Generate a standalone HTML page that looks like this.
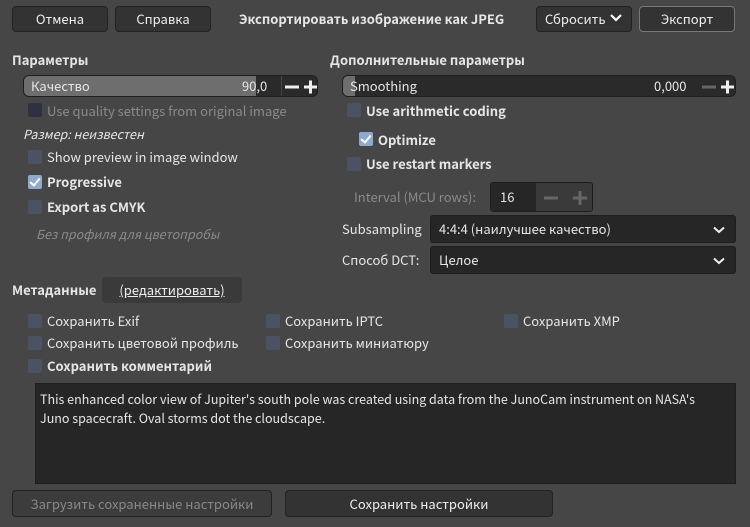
<!DOCTYPE html>
<html><head><meta charset="utf-8"><style>
*{box-sizing:border-box;margin:0;padding:0}
body{width:750px;height:527px;background:#464646;font-family:"Noto Sans CJK SC","DejaVu Sans",sans-serif;font-size:13px;color:#e6e6e6;position:relative;overflow:hidden}
.a{position:absolute;white-space:nowrap;line-height:16px}
.btn{position:absolute;background:#333;border:1px solid #222;border-radius:4px;text-align:center;color:#eee;font-size:13px}
.b{font-weight:bold}
.cb{position:absolute;width:14px;height:14px;background:#4a5263;border-radius:2px}
.cb.on{background:#8fa9cf}
.cb.on:after{content:"";position:absolute;left:4px;top:1px;width:4px;height:8px;border:solid #fff;border-width:0 2px 2px 0;transform:rotate(40deg)}
.dark{position:absolute;background:#262626;border:1px solid #1e1e1e;border-radius:3px}
.grey{color:#8a8a8a}
svg{position:absolute}
</style></head><body>
<div class="btn" style="left:12px;top:6px;width:96px;height:26px;line-height:24px">Отмена</div>
<div class="btn" style="left:115px;top:6px;width:96px;height:26px;line-height:24px">Справка</div>
<div class="a b" style="left:239px;top:11px">Экспортировать изображение как JPEG</div>
<div class="btn" style="left:536px;top:6px;width:96px;height:26px;line-height:24px;text-align:left;padding-left:8px">Сбросить</div>
<svg style="left:609px;top:13px" width="14" height="10"><path d="M2 2 L7 7 L12 2" stroke="#fff" stroke-width="2.2" fill="none"/></svg>
<div class="btn" style="left:639px;top:6px;width:96px;height:26px;line-height:24px;border-color:#777">Экспорт</div>

<div class="a b" style="left:12px;top:52px">Параметры</div>
<div class="dark" style="left:23px;top:75px;width:295px;height:22px;background:#2a2a2a;border-radius:6px;overflow:hidden">
 <div style="position:absolute;left:0;top:0;width:232px;height:22px;background:#6e6e6e"></div>
 <div class="a" style="left:7px;top:2px">Качество</div>
 <div class="a" style="left:218px;top:2px">90,0</div>
 <div style="position:absolute;left:257px;top:0;width:1px;height:22px;background:#444"></div>
 <svg style="left:260px;top:3px" width="34" height="16"><path d="M1 8 H15 M20 8 H33 M26.5 1.5 V14.5" stroke="#eee" stroke-width="3" fill="none"/></svg>
</div>
<div class="cb" style="left:28px;top:103px;background:#2e3240"></div>
<div class="a grey" style="left:47px;top:103px">Use quality settings from original image</div>
<div class="a" style="left:23px;top:126px;font-style:italic;font-size:12.5px">Размер: неизвестен</div>
<div class="cb" style="left:28px;top:150px"></div>
<div class="a" style="left:47px;top:149px">Show preview in image window</div>
<div class="cb on" style="left:28px;top:175px"></div>
<div class="a b" style="left:47px;top:174px">Progressive</div>
<div class="cb" style="left:28px;top:200px"></div>
<div class="a b" style="left:47px;top:199px">Export as CMYK</div>
<div class="a grey" style="left:36px;top:226px;font-style:italic;font-size:12.5px">Без профиля для цветопробы</div>

<div class="a b" style="left:330px;top:52px">Дополнительные параметры</div>
<div class="dark" style="left:342px;top:75px;width:394px;height:22px;background:#2a2a2a;border-radius:6px;overflow:hidden">
 <div style="position:absolute;left:0;top:0;width:12px;height:22px;background:#6e6e6e"></div>
 <div class="a" style="left:7px;top:2px">Smoothing</div>
 <div class="a" style="left:311px;top:2px">0,000</div>
 <svg style="left:358px;top:3px" width="34" height="16"><path d="M1 8 H15" stroke="#666" stroke-width="3"/><path d="M20 8 H33 M26.5 1.5 V14.5" stroke="#eee" stroke-width="3" fill="none"/></svg>
</div>
<div class="cb" style="left:347px;top:103px"></div>
<div class="a b" style="left:366px;top:103px">Use arithmetic coding</div>
<div class="cb on" style="left:359px;top:132px"></div>
<div class="a b" style="left:378px;top:132px">Optimize</div>
<div class="cb" style="left:347px;top:157px"></div>
<div class="a b" style="left:366px;top:156px">Use restart markers</div>
<div class="a grey" style="left:354px;top:189px">Interval (MCU rows):</div>
<div class="dark" style="left:490px;top:182px;width:103px;height:30px;background:#3a3a3a">
 <div style="position:absolute;left:0;top:0;width:45px;height:28px;background:#262626"></div>
 <div class="a" style="left:9px;top:6px">16</div>
 <svg style="left:50px;top:7px" width="50" height="16"><path d="M3 8 H17 M32 8 H46 M39 1 V15" stroke="#666" stroke-width="3" fill="none"/><path d="M73 0 V30" stroke="#222"/></svg>
</div>
<div class="a" style="left:342px;top:221px">Subsampling</div>
<div class="dark" style="left:430px;top:215px;width:306px;height:28px">
 <div class="a" style="left:8px;top:5px">4:4:4 (наилучшее качество)</div>
 <svg style="left:282px;top:10px" width="12" height="8"><path d="M1 1.5 L6 6 L11 1.5" stroke="#eee" stroke-width="2" fill="none"/></svg>
</div>
<div class="a" style="left:342px;top:252px">Способ DCT:</div>
<div class="dark" style="left:430px;top:246px;width:306px;height:28px">
 <div class="a" style="left:8px;top:5px">Целое</div>
 <svg style="left:282px;top:10px" width="12" height="8"><path d="M1 1.5 L6 6 L11 1.5" stroke="#eee" stroke-width="2" fill="none"/></svg>
</div>

<div class="a b" style="left:12px;top:282px">Метаданные</div>
<div class="btn" style="left:102px;top:277px;width:140px;height:26px;line-height:24px;background:#3a3a3a;border-color:#3a3a3a"><span style="text-decoration:underline">(редактировать)</span></div>
<div class="cb" style="left:28px;top:314px"></div><div class="a" style="left:47px;top:313px">Сохранить Exif</div>
<div class="cb" style="left:266px;top:314px"></div><div class="a" style="left:285px;top:313px">Сохранить IPTC</div>
<div class="cb" style="left:504px;top:314px"></div><div class="a" style="left:523px;top:313px">Сохранить XMP</div>
<div class="cb" style="left:28px;top:336px"></div><div class="a" style="left:47px;top:335px">Сохранить цветовой профиль</div>
<div class="cb" style="left:266px;top:336px"></div><div class="a" style="left:285px;top:335px">Сохранить миниатюру</div>
<div class="cb" style="left:28px;top:359px"></div><div class="a b" style="left:47px;top:358px">Сохранить комментарий</div>
<div class="dark" style="left:35px;top:383px;width:701px;height:101px;border-radius:0;padding:5px 4px;white-space:nowrap;line-height:19px;font-size:12.5px">This enhanced color view of Jupiter's south pole was created using data from the JunoCam instrument on NASA's<br>Juno spacecraft. Oval storms dot the cloudscape.</div>
<div class="btn" style="left:12px;top:490px;width:260px;height:27px;line-height:25px;color:#888;background:#3c3c3c">Загрузить сохраненные настройки</div>
<div class="btn" style="left:285px;top:490px;width:268px;height:27px;line-height:25px">Сохранить настройки</div>
</body></html>
